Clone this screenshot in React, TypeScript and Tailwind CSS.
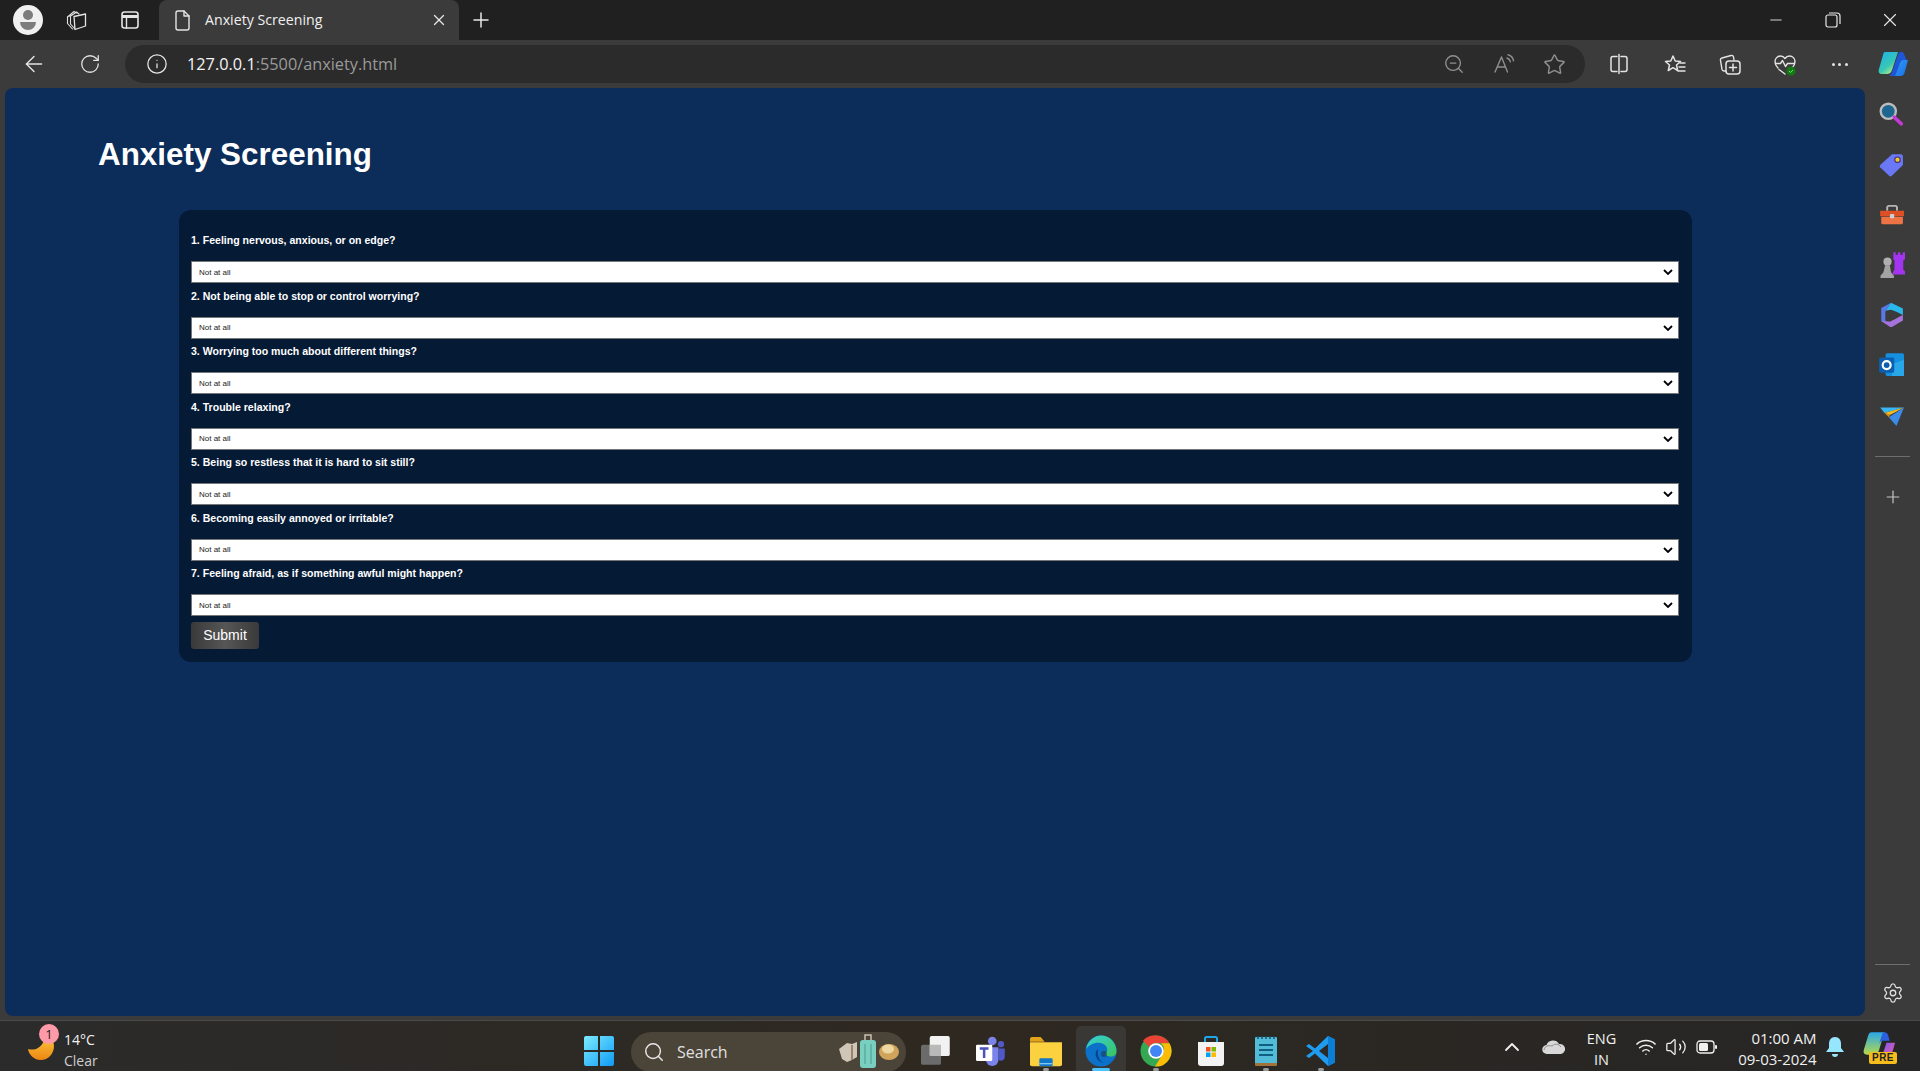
import React from "react";
import {
  ArrowLeft, RotateCw, Info, ZoomOut, Star, Plus, X, Minus, Settings, ChevronUp, Wifi, Volume2, Search,
} from "lucide-react";

const questions = [
  "1. Feeling nervous, anxious, or on edge?",
  "2. Not being able to stop or control worrying?",
  "3. Worrying too much about different things?",
  "4. Trouble relaxing?",
  "5. Being so restless that it is hard to sit still?",
  "6. Becoming easily annoyed or irritable?",
  "7. Feeling afraid, as if something awful might happen?",
];

function Svg({ size = 24, children }: { size?: number; children: React.ReactNode }) {
  return (
    <svg width={size} height={size} viewBox="0 0 24 24" fill="none" className="shrink-0">
      {children}
    </svg>
  );
}

const line = { stroke: "#e4e4e4", strokeWidth: 1.4, strokeLinecap: "round" as const, strokeLinejoin: "round" as const };

function Slot({ w, children }: { w: string; children: React.ReactNode }) {
  return <div className={`flex items-center justify-center shrink-0 ${w}`}>{children}</div>;
}

function Running({ blue, children }: { blue?: boolean; children: React.ReactNode }) {
  return (
    <div className="relative flex">
      {children}
      <span className={blue
        ? "absolute left-1/2 -translate-x-1/2 -bottom-[4px] w-[18px] h-[3px] rounded-full bg-[#4cc2ff]"
        : "absolute left-1/2 -translate-x-1/2 -bottom-[4px] w-[6px] h-[3px] rounded-full bg-[#9a9a9a]"} />
    </div>
  );
}

function Profile() {
  return (
    <div className="w-[30px] h-[30px] rounded-full bg-[#f0f0f0] flex flex-col items-center justify-center shrink-0 ml-[13px] overflow-hidden">
      <div className="w-[10px] h-[10px] rounded-full bg-[#7c7c7c]" />
      <div className="w-[16px] h-[8px] rounded-b-full bg-[#7c7c7c] mt-[2px]" />
    </div>
  );
}

function CollectionsTab() {
  return (
    <Svg>
      <path d="M2.5 9 9 3.5l2.5 1.500M5 8.500 11.500 4l2.500 2" {...line} strokeWidth={1.1} />
      <path d="M2.500 9v6.500L7.500 21M5.500 9v7l4.500 5" {...line} strokeWidth={1.1} />
      <path d="M9 8.500 20.500 6v12L10 21.500z" {...line} strokeWidth={1.3} />
    </Svg>
  );
}

function TabsIcon() {
  return (
    <Svg>
      <rect x="4" y="4" width="16" height="16" rx="2.500" {...line} strokeWidth={1.6} />
      <path d="M4 8.500h16" stroke="#e4e4e4" strokeWidth={3} />
      <path d="M8.500 9v11" {...line} />
    </Svg>
  );
}

function DocIcon() {
  return (
    <Svg>
      <path d="M6 5a2 2 0 0 1 2-2h6l5 5v12a2 2 0 0 1-2 2H8a2 2 0 0 1-2-2z" {...line} />
      <path d="M14 3v5h5" {...line} />
    </Svg>
  );
}

function ReadAloud() {
  return (
    <Svg>
      <path d="M3 20 9.500 5l6 15M5.500 15h8" stroke="#8f8f8f" strokeWidth={1.4} strokeLinecap="round" strokeLinejoin="round" />
      <path d="M15 6c2 .6 3 2 3.400 3.800M16 2.800c3 .8 5 3 5.500 6" stroke="#8f8f8f" strokeWidth={1.4} strokeLinecap="round" />
    </Svg>
  );
}

function SplitIcon() {
  return (
    <Svg>
      <path d="M10 4.500H6a2 2 0 0 0-2 2v11a2 2 0 0 0 2 2h4M14 4.500h4a2 2 0 0 1 2 2v11a2 2 0 0 1-2 2h-4" {...line} strokeWidth={1.5} />
      <path d="M12 2.500v19" {...line} strokeWidth={1.5} />
    </Svg>
  );
}

function FavIcon() {
  return (
    <Svg>
      <path d="m10 4 2.200 5 5.300.5-4 3.500 1.200 5.500-4.700-2.800-4.700 2.800L6.500 13l-4-3.500 5.300-.5z" {...line} strokeWidth={1.5} />
      <path d="M17 11h5M16 15h6M15 19h7" {...line} strokeWidth={1.3} />
    </Svg>
  );
}

function CollectionsTool() {
  return (
    <Svg>
      <path d="M8 19H6a2 2 0 0 1-2-1.600L2.500 8.500A2 2 0 0 1 4 6l9-2.500a2 2 0 0 1 2.500 1.500l.5 3" {...line} strokeWidth={1.4} />
      <rect x="8" y="9" width="14" height="13" rx="3" {...line} strokeWidth={1.5} />
      <path d="M15 12v7M11.500 15.500h7" {...line} strokeWidth={1.5} />
    </Svg>
  );
}

function HeartIcon() {
  return (
    <Svg>
      <path d="M5 16C3 14 2 12 2 9.500 2 6.500 4.500 4 7.500 4c2 0 3.500 1 4.500 2.500C13 5 14.500 4 16.500 4 19.500 4 22 6.500 22 9.500c0 2.500-1 4.500-3 6.500" {...line} strokeWidth={1.4} />
      <path d="M2.500 11.500h5l2-3 3 6 2-3h7" {...line} strokeWidth={1.4} />
      <path d="M6 17.500 12 22" {...line} strokeWidth={1.4} />
      <circle cx="18" cy="19" r="4.500" fill="#107c10" />
      <path d="m16 19 1.500 1.500 2.500-2.500" stroke="#7fd87f" strokeWidth={1} />
    </Svg>
  );
}

function Copilot({ size = 32 }: { size?: number }) {
  return (
    <svg width={size} height={size} viewBox="0 0 32 32" className="shrink-0">
      <defs>
        <linearGradient id="cpa" x1="0" y1="0" x2="0.700" y2="1">
          <stop offset="0" stopColor="#1bb0ee" />
          <stop offset="0.650" stopColor="#38c7b4" />
          <stop offset="1" stopColor="#b9ee8a" />
        </linearGradient>
        <linearGradient id="cpb" x1="0" y1="0" x2="1" y2="1">
          <stop offset="0" stopColor="#2f9bf3" />
          <stop offset="1" stopColor="#1a6fe8" />
        </linearGradient>
      </defs>
      <path d="M8 4h13l-6 18c-1 3-3 4-5 4H5c-3 0-4-2-3-5L6 7c.4-2 1-3 2-3z" fill="url(#cpa)" />
      <path d="M24 28H11c1.500 0 3-1 4-4l6-17c1-3 2-3 3.500-3 1.500 0 2.500 1 3 3l2 5" fill="#1f56d8" />
      <path d="M19 26l4-11c.6-1.500 1.600-3 3.500-3H31l-3.500 13c-.6 2-2 3-4 3H18z" fill="url(#cpb)" />
    </svg>
  );
}

function Magnifier() {
  return (
    <Svg size={26}>
      <circle cx="9.500" cy="9.500" r="7" fill="#1d6690" stroke="#bcbcbc" strokeWidth={2.200} />
      <path d="m15 15 6.500 6" stroke="#c639d8" strokeWidth={3.400} strokeLinecap="round" />
    </Svg>
  );
}

function TagIcon() {
  return (
    <Svg size={26}>
      <path d="M13 3h8a2 2 0 0 1 2 2v8L12.500 23a1.500 1.500 0 0 1-2 0L2 15a1.500 1.500 0 0 1 0-2z" fill="#6a78f5" />
      <circle cx="18" cy="8" r="2.500" fill="#f1c62b" stroke="#3d2a73" strokeWidth={1} />
    </Svg>
  );
}

function Toolbox() {
  return (
    <Svg size={26}>
      <path d="M8.500 9V6a1.500 1.500 0 0 1 1.500-1.500h6A1.500 1.500 0 0 1 17.500 6v3" stroke="#b5b5b5" strokeWidth={1.800} />
      <path d="M2 9h22v5H2z" fill="#df4f26" />
      <path d="M3 14.500h20V20a1.500 1.500 0 0 1-1.500 1.500h-17A1.500 1.500 0 0 1 3 20z" fill="#ee7344" />
      <rect x="11" y="12" width="4" height="4" rx="1" fill="#cfcfcf" />
    </Svg>
  );
}

function Chess() {
  return (
    <Svg size={28}>
      <path d="M14 2h2v2h2V2h2v2h2V2h2v6l-1.500 1v8L25 19v2H13.500v-2l1.500-2V9l-1-1z" fill="#a335f0" />
      <circle cx="9" cy="10" r="3.500" fill="#b0b0b0" />
      <path d="M7 13h4l1 6 2.500 3v3H3v-3l2.500-3z" fill="#a3a3a3" />
    </Svg>
  );
}

function M365() {
  return (
    <Svg size={26}>
      <path d="M12 1.500 3 6.500v12l4 2.500V9z" fill="#5a78e8" />
      <path d="M12 1.500 23 7v6l-6-3-5-2-5 1z" fill="#2ab7ea" />
      <path d="M3 18.500 12 24.500l11-6.500v-5l-6 3-6 3z" fill="#a672dc" />
      <path d="M11 8.500 17 12v4l-6 3-4-2V10z" fill="#3b3b3b" />
    </Svg>
  );
}

function Outlook() {
  return (
    <Svg size={26}>
      <rect x="7" y="2" width="17" height="21" rx="1.500" fill="#1490df" />
      <path d="M13 12 24 8v15H13z" fill="#28a8ea" />
      <rect x="1" y="6" width="14" height="14" rx="1.500" fill="#0a5fb0" />
      <circle cx="8" cy="13" r="3.700" fill="none" stroke="#fff" strokeWidth={2} />
    </Svg>
  );
}

function Send() {
  return (
    <Svg size={26}>
      <path d="M2 6h22L6 11z" fill="#39b7f2" />
      <path d="M6 11 24 6 11 13z" fill="#f3bc20" />
      <path d="M24 6 17 23l-7-8z" fill="#3b8be8" />
      <path d="m6 11 4 4 1-2z" fill="#e08a12" />
    </Svg>
  );
}

function Moon() {
  return (
    <svg width="30" height="30" viewBox="0 0 30 30" className="shrink-0">
      <defs>
        <linearGradient id="mn" x1="0" y1="0" x2="0" y2="1">
          <stop offset="0" stopColor="#f8c23a" />
          <stop offset="1" stopColor="#ee8613" />
        </linearGradient>
      </defs>
      <path d="M2 18c7 2 14-1 17-11 5 1 9 2 9 8 0 8-6 14-13 14C8 29 3 24 2 18z" fill="url(#mn)" />
    </svg>
  );
}

function WinLogo() {
  return (
    <svg width="30" height="30" viewBox="0 0 30 30" className="shrink-0">
      <defs>
        <linearGradient id="wn" x1="0" y1="0" x2="1" y2="1">
          <stop offset="0" stopColor="#7cebff" />
          <stop offset="1" stopColor="#0f9bf5" />
        </linearGradient>
      </defs>
      <path d="M0 2a2 2 0 0 1 2-2h12v14H0zM16 0h12a2 2 0 0 1 2 2v12H16zM0 16h14v14H2a2 2 0 0 1-2-2zM16 16h14v12a2 2 0 0 1-2 2H16z" fill="url(#wn)" />
    </svg>
  );
}

function SearchDeco() {
  return (
    <svg width="62" height="36" viewBox="0 0 62 36" className="shrink-0">
      <path d="M1 15 9 9l5 1 5-2v15l-5 3-5 2-5-3z" fill="#cfc6b8" />
      <path d="M14 11v15" stroke="#8c6b58" strokeWidth={1.500} />
      <rect x="22" y="6" width="16" height="28" rx="3" fill="#79cfc0" />
      <path d="M27 6V1h6v5" stroke="#c9c0ae" strokeWidth={1.500} fill="none" />
      <path d="M27 10v20M33 10v20" stroke="#4d9c8f" strokeWidth={1} />
      <ellipse cx="51" cy="18" rx="10" ry="8" fill="#d0a45a" />
      <ellipse cx="50" cy="15" rx="6" ry="4.500" fill="#ecd8a0" />
    </svg>
  );
}

function TaskView() {
  return (
    <Svg size={30}>
      <rect x="0" y="7" width="16" height="16" rx="1.500" fill="#6b6b6b" />
      <rect x="7" y="0" width="16" height="16" rx="1.500" fill="#f2f2f2" />
      <rect x="7" y="7" width="9" height="9" fill="#b9b9b9" />
    </Svg>
  );
}

function Teams() {
  return (
    <Svg size={30}>
      <circle cx="13" cy="4" r="3.500" fill="#7b83eb" />
      <circle cx="20" cy="6.500" r="2.500" fill="#5059c9" />
      <path d="M8 9h10v10a5 5 0 0 1-10 0z" fill="#7b83eb" />
      <path d="M18 10h5v7a3 3 0 0 1-5 2z" fill="#5059c9" />
      <rect x="0" y="7" width="13" height="13" rx="1" fill="#fff" />
      <path d="M3 10h7M6.500 10v7.500" stroke="#4b53bc" strokeWidth={2} />
    </Svg>
  );
}

function Folder() {
  return (
    <Svg size={32}>
      <path d="M0 3a1.500 1.500 0 0 1 1.500-1.500h6.500l3 3.500H0z" fill="#e3a31a" />
      <path d="M0 5.500h24V22a1.500 1.500 0 0 1-1.500 1.500h-21A1.500 1.500 0 0 1 0 22z" fill="#fcd13f" />
      <rect x="7" y="17.500" width="10" height="6" rx="1" fill="#1277c8" />
      <rect x="7" y="21" width="10" height="1" fill="#80c7f5" />
    </Svg>
  );
}

function Edge() {
  return (
    <svg width="32" height="32" viewBox="0 0 32 32" className="shrink-0">
      <defs>
        <linearGradient id="eg1" x1="0" y1="0" x2="1" y2="1">
          <stop offset="0" stopColor="#37d0d8" />
          <stop offset="1" stopColor="#39c45c" />
        </linearGradient>
      </defs>
      <circle cx="16" cy="16" r="15.500" fill="#0c71c8" />
      <path d="M1 14C3 5 10 .5 16 .5 25 .5 31.500 8 31.500 16.500c0 3-2 5-6 5-3 0-5-1-5-2.500 3-3 2-8-2-10-6-3-14 0-17.500 5z" fill="url(#eg1)" />
      <path d="M13 14c-4 3-3 10 3 13 4 2 10 1 13-3-4 4-9 5-12 3-4-3-5-9-4-13z" fill="#0a3f8c" />
      <circle cx="19" cy="19" r="3" fill="#27303a" opacity="0.500" />
    </svg>
  );
}

function Chrome() {
  return (
    <svg width="32" height="32" viewBox="0 0 32 32" className="shrink-0">
      <circle cx="16" cy="16" r="15.500" fill="#34a853" />
      <path d="M16 .5A15.500 15.500 0 0 1 29.400 8.300H16A8 8 0 0 0 9 12L3 5.500A15.500 15.500 0 0 1 16 .5z" fill="#ea4335" />
      <path d="M29.400 8.300A15.500 15.500 0 0 1 15 31.500L22 20a8 8 0 0 0-1-11.700z" fill="#fbbc05" />
      <circle cx="16" cy="16" r="7.800" fill="#fff" />
      <circle cx="16" cy="16" r="6" fill="#4285f4" />
    </svg>
  );
}

function Store() {
  return (
    <svg width="32" height="32" viewBox="0 0 32 32" className="shrink-0">
      <path d="M10 8V3.500A1.500 1.500 0 0 1 11.500 2h9A1.500 1.500 0 0 1 22 3.500V8" stroke="#1ea5e8" strokeWidth={2} fill="none" />
      <path d="M3 7h26v21a3 3 0 0 1-3 3H6a3 3 0 0 1-3-3z" fill="#f3f3f3" />
      <rect x="11" y="12" width="4.500" height="4.500" fill="#f25022" />
      <rect x="16.500" y="12" width="4.500" height="4.500" fill="#7fba00" />
      <rect x="11" y="17.500" width="4.500" height="4.500" fill="#00a4ef" />
      <rect x="16.500" y="17.500" width="4.500" height="4.500" fill="#ffb900" />
    </svg>
  );
}

function Notepad() {
  return (
    <svg width="32" height="32" viewBox="0 0 32 32" className="shrink-0">
      <rect x="5" y="2" width="22" height="28" rx="1" fill="#52bbd8" />
      <path d="M5 28h22v2a1 1 0 0 1-1 1H6a1 1 0 0 1-1-1z" fill="#a3713a" />
      <path d="M8 1v3M12 1v3M16 1v3M20 1v3M24 1v3" stroke="#16506b" strokeWidth={1.500} />
      <path d="M9 10h14M9 15h14M9 20h14" stroke="#0e5f80" strokeWidth={2} />
    </svg>
  );
}

function VSCode() {
  return (
    <svg width="32" height="32" viewBox="0 0 32 32" className="shrink-0">
      <path d="M23 1 30 4.500v23L23 31 10 18.500 4 23l-3-2 7-5-7-5 3-2 6 4.500z" fill="#1f9cf0" />
      <path d="M23 9v14l-9-7z" fill="#2b2a28" />
      <path d="M23 1 30 4.500v23L23 31z" fill="#0a7fd3" />
    </svg>
  );
}

function Cloud() {
  return (
    <svg width="24" height="16" viewBox="0 0 24 16" className="shrink-0">
      <path d="M5 15a4.500 4.500 0 0 1-.5-9A7 7 0 0 1 17 5a5 5 0 0 1 2 10z" fill="#d8d8d8" />
      <path d="M2 11C3 7 6 6 10 7c3-3 7-2 9 1" stroke="#8f8f8f" strokeWidth={1} fill="none" />
    </svg>
  );
}

function Battery() {
  return (
    <svg width="22" height="14" viewBox="0 0 22 14" className="shrink-0">
      <rect x="1" y="1" width="17" height="12" rx="3" fill="none" stroke="#f0f0f0" strokeWidth={1.300} />
      <rect x="3" y="3" width="9" height="8" rx="1.500" fill="#f0f0f0" />
      <rect x="19" y="5" width="2" height="4" rx="1" fill="#f0f0f0" />
    </svg>
  );
}

function Bell() {
  return (
    <svg width="18" height="22" viewBox="0 0 18 22" className="shrink-0">
      <path d="M9 1c4 0 6 3 6 7v4l3 4H0l3-4V8c0-4 2-7 6-7z" fill="#97e6ff" />
      <path d="M6 18h6a3 3 0 0 1-6 0z" fill="#97e6ff" />
    </svg>
  );
}

function CopilotPre() {
  return (
    <div className="relative w-[36px] h-[34px] shrink-0">
      <svg width="36" height="30" viewBox="0 0 32 28">
        <defs>
          <linearGradient id="cp1" x1="0" y1="0" x2="0" y2="1">
            <stop offset="0" stopColor="#27a6ea" />
            <stop offset="1" stopColor="#b7d94a" />
          </linearGradient>
          <linearGradient id="cp2" x1="0" y1="0" x2="1" y2="1">
            <stop offset="0" stopColor="#7a5af0" />
            <stop offset="1" stopColor="#ee5aa8" />
          </linearGradient>
        </defs>
        <path d="M9 2h12l-5 17c-.8 3-3 4-5 4H5c-3 0-4-2-3-5L6 5c.5-2 1.500-3 3-3z" fill="url(#cp1)" />
        <path d="M21 2c2 0 3 1 3.500 3l1.500 5h-6c-2 0-3 1-4 3l3-9c.4-1.500 1-2 2-2z" fill="#2b5fe0" />
        <path d="M19 24l4-12h8l-3.500 12z" fill="url(#cp2)" />
      </svg>
      <span className="absolute left-[8px] bottom-0 w-[28px] h-[12px] rounded-[2px] bg-[#f5bc1b] text-[#222] text-[10px] font-bold leading-[12px] text-center font-['Liberation_Sans',sans-serif] tracking-[0.5px]">
        PRE
      </span>
    </div>
  );
}

function SideSlot({ h, children }: { h: string; children: React.ReactNode }) {
  return <div className={`flex items-center justify-center w-full shrink-0 ${h}`}>{children}</div>;
}

export default function App() {
  return (
    <div className="w-[1920px] h-[1071px] flex flex-col overflow-hidden bg-[#3b3b3b] font-['Open_Sans','Noto_Sans',sans-serif]">
      {/* tab strip */}
      <div className="h-[40px] shrink-0 flex items-end bg-[#202020]">
        <div className="h-[40px] flex items-center">
          <Profile />
          <Slot w="w-[53px] ml-[7.5px]"><CollectionsTab /></Slot>
          <Slot w="w-[53px]"><TabsIcon /></Slot>
        </div>
        <div className="ml-[2.5px] w-[300px] h-[40px] rounded-t-lg bg-[#3b3b3b] flex items-center pl-[11px] pr-[11px]">
          <DocIcon />
          <span className="ml-[11px] -mt-[1px] text-[14.2px] text-[#f0f0f0] flex-1">Anxiety Screening</span>
          <X size={18} color="#e8e8e8" strokeWidth={1.6} />
        </div>
        <div className="h-[40px] flex items-center flex-1 pr-[1.5px]">
          <Slot w="w-[44px]"><Plus size={24} color="#e8e8e8" strokeWidth={1.5} /></Slot>
          <div className="flex-1" />
          <Slot w="w-[57px]"><Minus size={18} color="#e8e8e8" strokeWidth={1.2} /></Slot>
          <Slot w="w-[57px]">
            <svg width="16" height="16" viewBox="0 0 16 16" fill="none">
              <rect x="1" y="3" width="11" height="12" rx="2" stroke="#e8e8e8" strokeWidth={1.2} />
              <path d="M4 1h8a3 3 0 0 1 3 3v8" stroke="#e8e8e8" strokeWidth={1.2} />
            </svg>
          </Slot>
          <Slot w="w-[57px]"><X size={22} color="#e8e8e8" strokeWidth={1.2} /></Slot>
        </div>
      </div>

      {/* toolbar */}
      <div className="h-[48px] shrink-0 flex items-center bg-[#3b3b3b]">
        <Slot w="w-[68px]"><ArrowLeft size={26} color="#e4e4e4" strokeWidth={1.3} /></Slot>
        <Slot w="w-[44px]"><RotateCw size={22} color="#e4e4e4" strokeWidth={1.4} /></Slot>
        <div className="ml-[13px] w-[1460px] h-[38px] rounded-full bg-[#2b2b2b] flex items-center pl-[21px] pr-[6px]">
          <Info size={22} color="#e4e4e4" strokeWidth={1.4} className="shrink-0" />
          <span className="ml-[19px] text-[16.3px] text-[#f5f5f5]">127.0.0.1<span className="text-[#9a9a9a]">:5500/anxiety.html</span></span>
          <div className="flex-1" />
          <Slot w="w-[50px]"><ZoomOut size={22} color="#8f8f8f" strokeWidth={1.5} /></Slot>
          <Slot w="w-[50px]"><ReadAloud /></Slot>
          <Slot w="w-[50px]"><Star size={23} color="#8f8f8f" strokeWidth={1.5} /></Slot>
        </div>
        <div className="flex items-center ml-[6.5px]">
          <Slot w="w-[55px]"><SplitIcon /></Slot>
          <Slot w="w-[56px]"><FavIcon /></Slot>
          <Slot w="w-[55px]"><CollectionsTool /></Slot>
          <Slot w="w-[55px]"><HeartIcon /></Slot>
          <Slot w="w-[54px]">
            <div className="flex gap-[3.5px]">
              <div className="w-[3px] h-[3px] rounded-full bg-[#e4e4e4]" />
              <div className="w-[3px] h-[3px] rounded-full bg-[#e4e4e4]" />
              <div className="w-[3px] h-[3px] rounded-full bg-[#e4e4e4]" />
            </div>
          </Slot>
          <Slot w="w-[53px]"><Copilot /></Slot>
        </div>
      </div>

      {/* middle */}
      <div className="h-[928px] shrink-0 flex pl-[5px]">
        <main className="w-[1860px] h-full rounded-lg bg-[#0c2c5a] pt-[47px] font-['Liberation_Sans',sans-serif]">
          <h1 className="ml-[93px] text-[31.4px] leading-[40px] font-bold text-white">Anxiety Screening</h1>
          <form className="ml-[174px] mt-[35px] w-[1513px] rounded-[12px] bg-[#051a35] pl-[12px] pr-[13px] pt-[23px] pb-[13px]">
            {questions.map((q) => (
              <div key={q} className="h-[55.5px]">
                <label className="block h-[14px] mb-[14px] text-[10.55px] leading-[14px] font-bold text-white">{q}</label>
                <div className="relative">
                  <select className="block w-full h-[22px] appearance-none bg-white text-[#222] text-[8px] border border-[#767676] pl-[7px] pt-[1px]">
                    <option>Not at all</option>
                  </select>
                  <svg width="10" height="6" viewBox="0 0 10 6" fill="none" className="absolute right-[6px] top-[8px] pointer-events-none">
                    <path d="M1 1l4 4 4-4" stroke="#000" strokeWidth={1.8} />
                  </svg>
                </div>
              </div>
            ))}
            <button type="button" className="block mt-[0.5px] w-[68px] h-[27px] rounded-[3px] bg-linear-to-r from-[#3a3a3a] via-[#565656] to-[#3a3a3a] text-[14px] text-white text-center">
              Submit
            </button>
          </form>
        </main>
        <aside className="w-[55px] h-[933px] shrink-0 flex flex-col items-center pt-[1px]">
          <div className="w-full flex flex-col pr-[3px]">
            <SideSlot h="h-[50px]"><Magnifier /></SideSlot>
            <SideSlot h="h-[50px]"><TagIcon /></SideSlot>
            <SideSlot h="h-[50px]"><Toolbox /></SideSlot>
            <SideSlot h="h-[50px]"><Chess /></SideSlot>
            <SideSlot h="h-[50px]"><M365 /></SideSlot>
            <SideSlot h="h-[50px]"><Outlook /></SideSlot>
            <SideSlot h="h-[50px]"><Send /></SideSlot>
          </div>
          <div className="w-[35px] h-px bg-[#6e6e6e] mt-[17px] shrink-0" />
          <SideSlot h="h-[80px]"><Plus size={20} color="#c8c8c8" strokeWidth={1.4} /></SideSlot>
          <div className="flex-1" />
          <div className="w-[35px] h-px bg-[#6e6e6e] shrink-0" />
          <SideSlot h="h-[56px]"><Settings size={22} color="#e0e0e0" strokeWidth={1.4} /></SideSlot>
        </aside>
      </div>

      {/* taskbar */}
      <div className="h-[51px] shrink-0 flex items-center border-t border-[#4a4a4a] bg-linear-to-r from-[#2b2b2b] via-[#2e2820] to-[#262626] mt-[4px] relative">
        <div className="flex items-center ml-[26px] w-[100px] relative">
          <Moon />
          <span className="absolute left-[13px] top-[2px] w-[20px] h-[20px] rounded-full bg-[#ff9aa8] text-[13px] leading-[20px] text-center text-[#222]">1</span>
          <div className="ml-[8px] mt-[7px] flex flex-col text-[14px] leading-[21px]">
            <span className="text-[#f2f2f2]">14°C</span>
            <span className="text-[#cfcfcf]">Clear</span>
          </div>
        </div>
        <div className="ml-[458px] mt-[10px]"><WinLogo /></div>
        <div className="ml-[17px] mt-[11px] w-[275px] h-[40px] rounded-full bg-[#4b4438] flex items-center pl-[12px] pr-[6px]">
          <Search size={22} color="#e8e8e8" strokeWidth={1.6} />
          <span className="ml-[12px] text-[16px] text-[#e0e0e0] flex-1">Search</span>
          <SearchDeco />
        </div>
        <div className="flex items-center ml-[2px] mt-[9px]">
          <Slot w="w-[55px]"><TaskView /></Slot>
          <Slot w="w-[55px]"><Teams /></Slot>
          <Slot w="w-[55px]"><Running><Folder /></Running></Slot>
          <div className="w-[50px] h-[50px] mx-[2.5px] rounded-t-[5px] bg-[#3a3834] flex items-center justify-center shrink-0"><Running blue><Edge /></Running></div>
          <Slot w="w-[55px]"><Running><Chrome /></Running></Slot>
          <Slot w="w-[55px]"><Store /></Slot>
          <Slot w="w-[55px]"><Running><Notepad /></Running></Slot>
          <Slot w="w-[55px]"><Running><VSCode /></Running></Slot>
        </div>
        <div className="flex-1" />
        <div className="flex items-center mt-[2px] pr-[15.5px]">
          <Slot w="w-[34px]"><ChevronUp size={24} color="#f0f0f0" strokeWidth={1.8} /></Slot>
          <Slot w="w-[40px] ml-[5px]"><Cloud /></Slot>
          <div className="w-[50px] ml-[3px] mt-[3px] text-center text-[14.5px] leading-[21px] text-[#f0f0f0]">ENG<br />IN</div>
          <Slot w="w-[30px] ml-[4px]"><Wifi size={22} color="#f0f0f0" strokeWidth={1.6} /></Slot>
          <Slot w="w-[30px]"><Volume2 size={22} color="#f0f0f0" strokeWidth={1.4} /></Slot>
          <Slot w="w-[32px]"><Battery /></Slot>
          <div className="w-[92px] ml-[2px] mt-[4px] text-right text-[15px] leading-[21px] text-[#f0f0f0]">01:00 AM<br />09-03-2024</div>
          <Slot w="w-[36px]"><Bell /></Slot>
          <Slot w="w-[51px] ml-[1px]"><CopilotPre /></Slot>
        </div>
      </div>
    </div>
  );
}
